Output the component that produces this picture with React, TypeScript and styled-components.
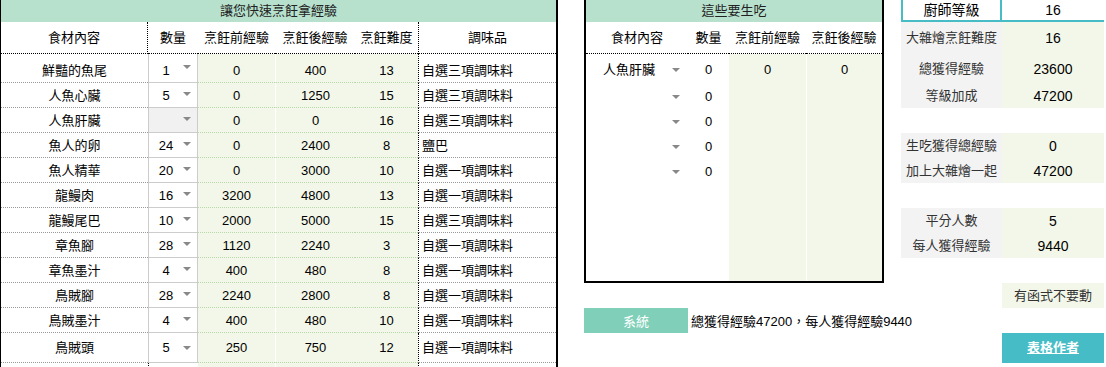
import React from "react";
import styled, { createGlobalStyle, css } from "styled-components";

const HEAD_GREEN = "#b7e1cd";
const EXP_BG = "#f3f7e9";
const TEAL = "#46bdc6";

const GlobalStyle = createGlobalStyle`
  html, body {
    margin: 0;
    padding: 0;
    background: #fff;
  }
  body {
    font-family: "Liberation Sans", "Noto Sans CJK TC", sans-serif;
    font-size: 13px;
    color: #000;
  }
  * {
    box-sizing: border-box;
  }
`;

const Page = styled.div`
  display: flex;
  align-items: flex-start;
  width: 1106px;
  height: 367px;
  overflow: hidden;
`;

// ---- left sheet ----

const LeftSheet = styled.div`
  display: grid;
  flex-shrink: 0;
  grid-template-columns: 147px 50px 77px 80px 63px 138px;
  grid-template-rows: 22px 32px 29px repeat(10, 25px) 30px 25px;
  border-left: 1px solid #000;
  border-right: 2px solid #000;
`;

const TitleBar = styled.div`
  grid-column: 1 / -1;
  display: flex;
  align-items: center;
  justify-content: center;
  background: ${HEAD_GREEN};
  color: #222;
  line-height: 16px;
`;

const HeadCell = styled.div<{ $rule?: "left" | "right" }>`
  display: flex;
  align-items: center;
  justify-content: center;
  line-height: 16px;
  white-space: nowrap;
  border-bottom: 1px dotted #000;
  ${(p) => p.$rule === "right" && "border-right: 1px dotted #000;"}
  ${(p) => p.$rule === "left" && "border-left: 1px dotted #000;"}
`;

const rowText = css<{ $tall?: boolean }>`
  display: flex;
  align-items: ${(p) => (p.$tall ? "center" : "flex-end")};
  padding-bottom: ${(p) => (p.$tall ? "0" : "3px")};
  line-height: 16px;
  white-space: nowrap;
`;

const NameCell = styled.div<{ $tall?: boolean; $blank?: boolean }>`
  ${rowText};
  justify-content: center;
  border-bottom: ${(p) => (p.$blank ? "none" : "1px dotted #999")};
`;

const QtyCell = styled.div<{ $tall?: boolean; $empty?: boolean }>`
  ${rowText};
  background: ${(p) => (p.$empty ? "#f1f1f1" : "#fff")};
  border-left: 1px solid #ccc;
  border-right: 1px solid #ccc;
  border-bottom: 1px solid #ccc;
`;

const QtyGap = styled.div`
  border-left: 1px dotted #000;
`;

const ChipText = styled.span`
  flex: 1;
  text-align: center;
`;

const Caret = styled.span<{ $gap?: number }>`
  width: 0;
  height: 0;
  border-left: 4px solid transparent;
  border-right: 4px solid transparent;
  border-top: 4px solid #888;
  margin-right: ${(p) => p.$gap ?? 6}px;
  align-self: center;
`;

const ExpCell = styled.div<{ $tall?: boolean; $split?: boolean; $blank?: boolean }>`
  ${rowText};
  justify-content: center;
  background: ${EXP_BG};
  border-bottom: ${(p) => (p.$blank ? "none" : "1px dotted #b6d7a8")};
  ${(p) => p.$split && "border-left: 1px solid #fff;"}
`;

const SeasonCell = styled.div<{ $tall?: boolean; $blank?: boolean }>`
  ${rowText};
  padding-left: 3px;
  border-left: 1px dotted #000;
  border-bottom: ${(p) => (p.$blank ? "none" : "1px dotted #999")};
`;

// ---- middle sheet ----

const MiddleColumn = styled.div`
  display: flex;
  flex-direction: column;
  flex-shrink: 0;
  width: 300px;
  margin-left: 26px;
`;

const RawSheet = styled.div`
  display: grid;
  grid-template-columns: 102px 41px 77px 76px;
  grid-template-rows: 22px 32px 29px repeat(7, 25px) 23px;
  border: 2px solid #000;
  border-top: none;
`;

const RawCell = styled.div`
  display: flex;
  align-items: center;
  justify-content: center;
  padding-top: 2px;
  line-height: 16px;
  white-space: nowrap;
`;

const RawExp = styled(RawCell)<{ $split?: boolean }>`
  background: ${EXP_BG};
  ${(p) => p.$split && "border-left: 1px solid #fff;"}
`;

const SystemRow = styled.div`
  display: flex;
  align-items: center;
  height: 25px;
  margin-top: 25px;
`;

const SystemBadge = styled.div`
  display: flex;
  flex-shrink: 0;
  align-items: center;
  justify-content: center;
  width: 104px;
  height: 100%;
  background: #80cfb9;
  color: #fff;
`;

const SystemNote = styled.span`
  flex-shrink: 0;
  padding-left: 3px;
  white-space: nowrap;
`;

// ---- right panel ----

const SidePanel = styled.div`
  display: grid;
  flex-shrink: 0;
  grid-template-columns: 101px 102px;
  grid-template-rows: 22px 32px 29px repeat(10, 25px) 30px;
  margin-left: 17px;
`;

const sideCell = css`
  display: flex;
  align-items: center;
  justify-content: center;
  line-height: 16px;
  white-space: nowrap;
`;

const LevelLabel = styled.div`
  ${sideCell};
  font-size: 14px;
  border-left: 2px solid ${TEAL};
  border-right: 2px solid ${TEAL};
  border-bottom: 2px solid ${TEAL};
`;

const LevelValue = styled.div`
  ${sideCell};
  font-size: 14px;
  border-bottom: 2px solid ${TEAL};
`;

const SideLabel = styled.div`
  ${sideCell};
  background: #f3f3f3;
  color: #333;
`;

const SideValue = styled.div`
  ${sideCell};
  background: ${EXP_BG};
  font-size: 14px;
`;

const Blank = styled.div``;

const Note = styled.div`
  ${sideCell};
  background: ${EXP_BG};
  color: #333;
`;

const AuthorButton = styled.a`
  ${sideCell};
  background: ${TEAL};
  color: #fff;
  font-weight: bold;
  text-decoration: underline;
  cursor: pointer;
`;

type Dish = {
  name: string;
  qty: string;
  before: number;
  after: number;
  level: number;
  season: string;
};

const dishes: Dish[] = [
  { name: "鮮豔的魚尾", qty: "1", before: 0, after: 400, level: 13, season: "自選三項調味料" },
  { name: "人魚心臟", qty: "5", before: 0, after: 1250, level: 15, season: "自選三項調味料" },
  { name: "人魚肝臟", qty: "", before: 0, after: 0, level: 16, season: "自選三項調味料" },
  { name: "魚人的卵", qty: "24", before: 0, after: 2400, level: 8, season: "鹽巴" },
  { name: "魚人精華", qty: "20", before: 0, after: 3000, level: 10, season: "自選一項調味料" },
  { name: "龍鰻肉", qty: "16", before: 3200, after: 4800, level: 13, season: "自選一項調味料" },
  { name: "龍鰻尾巴", qty: "10", before: 2000, after: 5000, level: 15, season: "自選三項調味料" },
  { name: "章魚腳", qty: "28", before: 1120, after: 2240, level: 3, season: "自選一項調味料" },
  { name: "章魚墨汁", qty: "4", before: 400, after: 480, level: 8, season: "自選一項調味料" },
  { name: "鳥賊腳", qty: "28", before: 2240, after: 2800, level: 8, season: "自選一項調味料" },
  { name: "鳥賊墨汁", qty: "4", before: 400, after: 480, level: 10, season: "自選一項調味料" },
  { name: "鳥賊頭", qty: "5", before: 250, after: 750, level: 12, season: "自選一項調味料" },
];

const rawRows = [
  { name: "人魚肝臟", qty: 0, before: "0", after: "0" },
  { name: "", qty: 0, before: "", after: "" },
  { name: "", qty: 0, before: "", after: "" },
  { name: "", qty: 0, before: "", after: "" },
  { name: "", qty: 0, before: "", after: "" },
];

const sideRows: ([string, string] | null)[] = [
  ["大雜燴烹飪難度", "16"],
  ["總獲得經驗", "23600"],
  ["等級加成", "47200"],
  null,
  ["生吃獲得總經驗", "0"],
  ["加上大雜燴一起", "47200"],
  null,
  ["平分人數", "5"],
  ["每人獲得經驗", "9440"],
  null,
];

const CookSheet: React.FC = () => (
  <LeftSheet>
    <TitleBar>讓您快速烹飪拿經驗</TitleBar>
    <HeadCell $rule="right">食材內容</HeadCell>
    <HeadCell>數量</HeadCell>
    <HeadCell>烹飪前經驗</HeadCell>
    <HeadCell>烹飪後經驗</HeadCell>
    <HeadCell>烹飪難度</HeadCell>
    <HeadCell $rule="left">調味品</HeadCell>
    {dishes.map((d, i) => {
      const tall = i === dishes.length - 1;
      return (
        <React.Fragment key={d.name}>
          <NameCell $tall={tall}>{d.name}</NameCell>
          <QtyCell $tall={tall} $empty={d.qty === ""}>
            <ChipText>{d.qty}</ChipText>
            <Caret />
          </QtyCell>
          <ExpCell $tall={tall}>{d.before}</ExpCell>
          <ExpCell $tall={tall} $split>
            {d.after}
          </ExpCell>
          <ExpCell $tall={tall}>{d.level}</ExpCell>
          <SeasonCell $tall={tall}>{d.season}</SeasonCell>
        </React.Fragment>
      );
    })}
    <NameCell $blank />
    <QtyGap />
    <ExpCell $blank />
    <ExpCell $blank $split />
    <ExpCell $blank />
    <SeasonCell $blank />
  </LeftSheet>
);

const RawSheetView: React.FC = () => (
  <RawSheet>
    <TitleBar>這些要生吃</TitleBar>
    <HeadCell>食材內容</HeadCell>
    <HeadCell>數量</HeadCell>
    <HeadCell>烹飪前經驗</HeadCell>
    <HeadCell>烹飪後經驗</HeadCell>
    {rawRows.map((r, i) => (
      <React.Fragment key={i}>
        <RawCell>
          <ChipText>{r.name}</ChipText>
          <Caret $gap={8} />
        </RawCell>
        <RawCell>{r.qty}</RawCell>
        <RawExp>{r.before}</RawExp>
        <RawExp $split>{r.after}</RawExp>
      </React.Fragment>
    ))}
    {[0, 1, 2, 3].map((i) => (
      <React.Fragment key={`pad-${i}`}>
        <Blank />
        <Blank />
        <RawExp />
        <RawExp $split />
      </React.Fragment>
    ))}
  </RawSheet>
);

const Summary: React.FC = () => (
  <SidePanel>
    <LevelLabel>廚師等級</LevelLabel>
    <LevelValue>16</LevelValue>
    {sideRows.map((row, i) =>
      row ? (
        <React.Fragment key={i}>
          <SideLabel>{row[0]}</SideLabel>
          <SideValue>{row[1]}</SideValue>
        </React.Fragment>
      ) : (
        <React.Fragment key={i}>
          <Blank />
          <Blank />
        </React.Fragment>
      ),
    )}
    <Blank />
    <Note>有函式不要動</Note>
    <Blank />
    <Blank />
    <Blank />
    <AuthorButton>表格作者</AuthorButton>
  </SidePanel>
);

const App: React.FC = () => (
  <>
    <GlobalStyle />
    <Page>
      <CookSheet />
      <MiddleColumn>
        <RawSheetView />
        <SystemRow>
          <SystemBadge>系統</SystemBadge>
          <SystemNote>總獲得經驗47200，每人獲得經驗9440</SystemNote>
        </SystemRow>
      </MiddleColumn>
      <Summary />
    </Page>
  </>
);

export default App;
